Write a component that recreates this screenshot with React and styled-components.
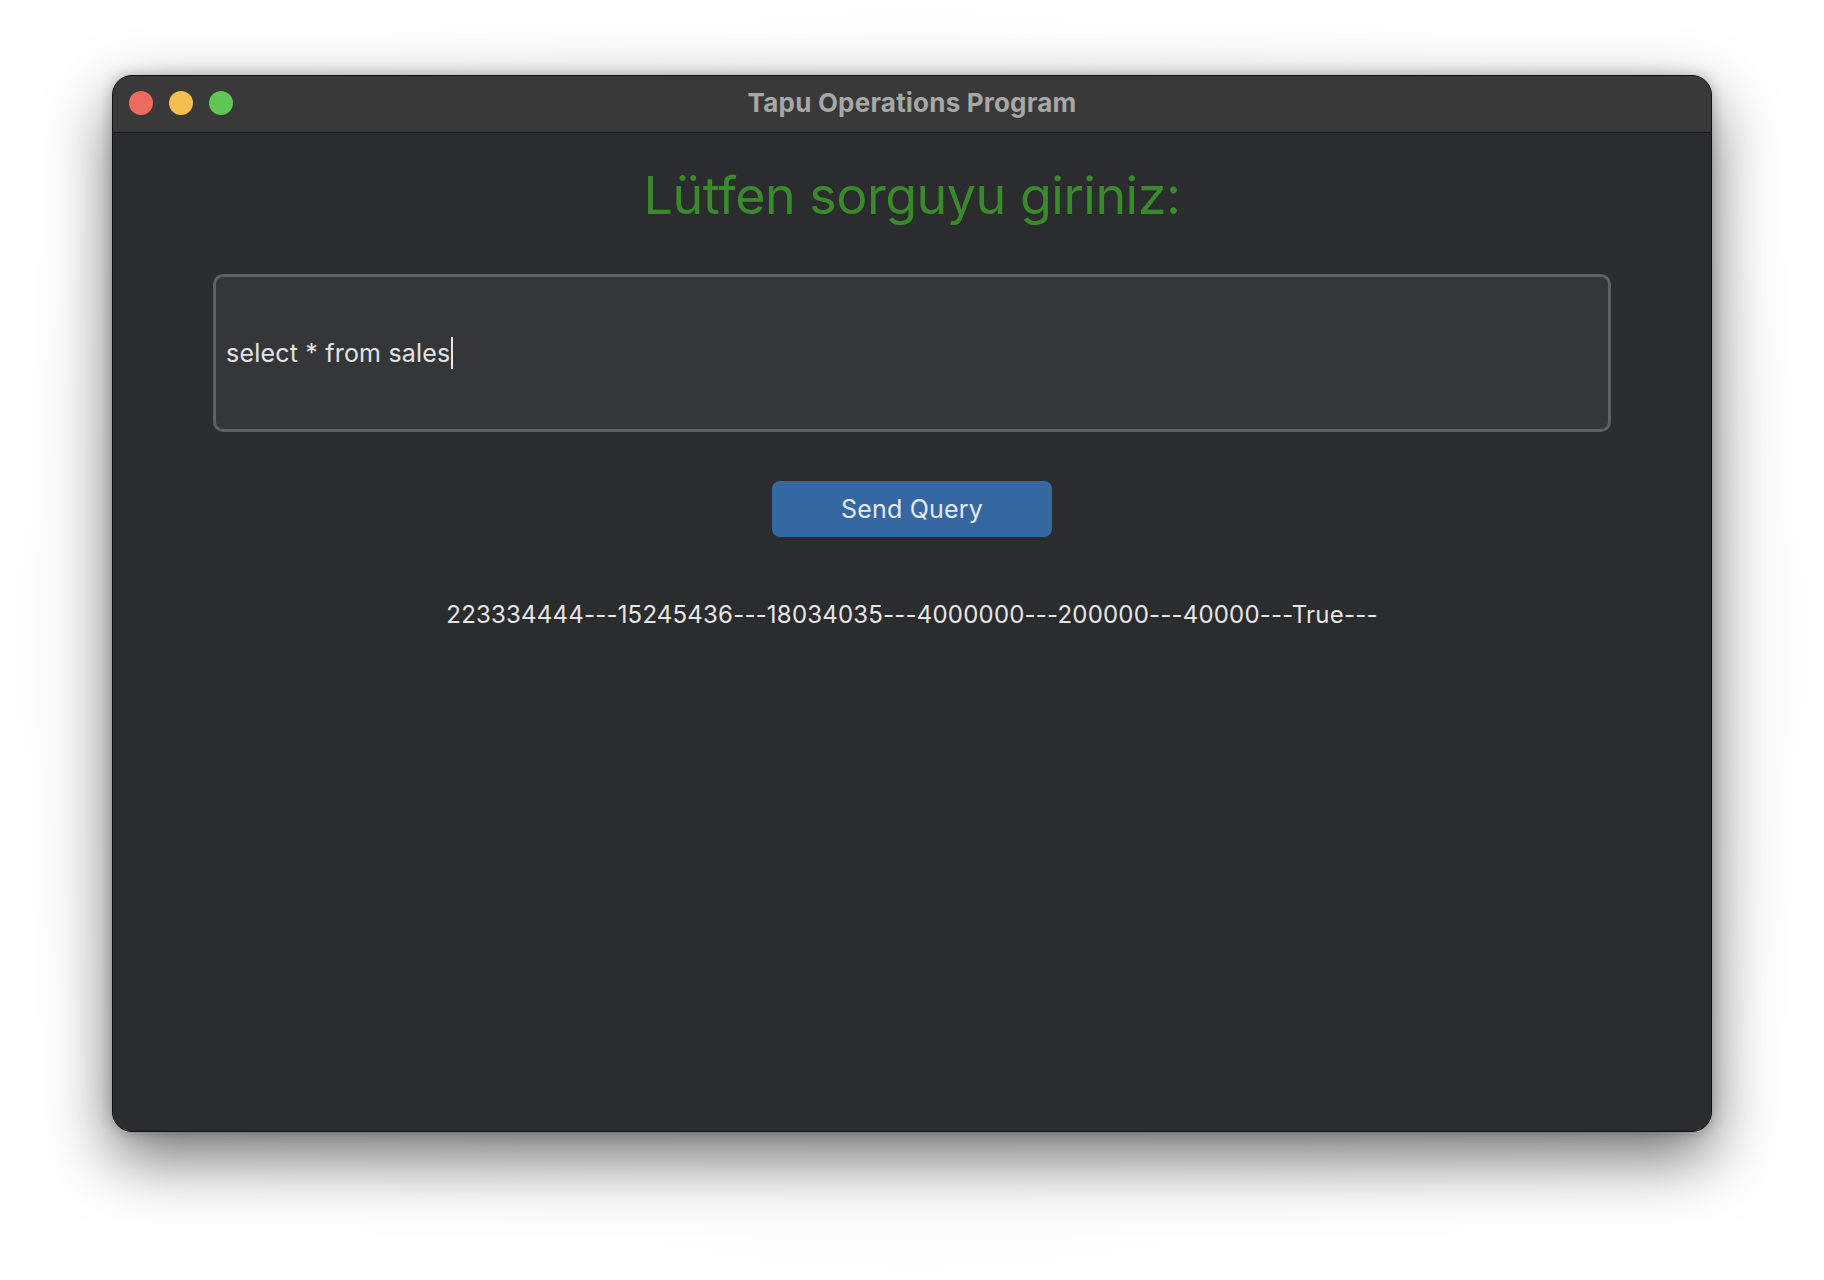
import React from 'react';
import styled, { createGlobalStyle } from 'styled-components';

const GlobalStyle = createGlobalStyle`
  html, body {
    margin: 0;
    padding: 0;
    background: #ffffff;
  }
  body {
    font-family: Inter, "Noto Sans", sans-serif;
  }
`;

const Page = styled.div`
  width: 1824px;
  height: 1280px;
  display: flex;
  justify-content: center;
  align-items: flex-start;
  padding-top: 75px;
  box-sizing: border-box;
  background: radial-gradient(ellipse at 50% 50%, #f4f4f4 0%, #ffffff 80%);
`;

const Window = styled.div`
  width: 1600px;
  height: 1057px;
  display: flex;
  flex-direction: column;
  border-radius: 20px;
  overflow: hidden;
  background: #2b2c2e;
  border: 1px solid #111;
  box-shadow: inset 0 0 0 1px #4e4f51, 0 26px 64px rgba(0, 0, 0, 0.55),
    0 0 14px rgba(0, 0, 0, 0.25);
  box-sizing: border-box;
`;

const TitleBar = styled.div`
  position: relative;
  height: 56px;
  flex-shrink: 0;
  display: flex;
  align-items: center;
  justify-content: center;
  background: #39393a;
  border-bottom: 1px solid #141414;
`;

const Lights = styled.div`
  position: absolute;
  left: 16px;
  top: 15px;
  display: flex;
  gap: 16px;
`;

const Light = styled.span`
  width: 24px;
  height: 24px;
  border-radius: 50%;
  background: ${(p) => p.color};
`;

const Title = styled.div`
  font-family: Inter, "Noto Sans", sans-serif;
  font-weight: 700;
  font-size: 26px;
  color: #a7a7a7;
  letter-spacing: 0.2px;
  margin-top: -3px;
`;

const Body = styled.div`
  flex: 1;
  display: flex;
  flex-direction: column;
  align-items: center;
  padding: 27px 100px 0;
  background: #2b2c2e;
`;

const Heading = styled.h1`
  margin: 0;
  font-family: Inter, "Noto Sans", sans-serif;
  font-weight: 400;
  font-size: 52px;
  line-height: 72px;
  color: #3a8a2c;
  letter-spacing: -0.5px;
`;

const QueryBox = styled.div`
  margin-top: 42px;
  width: 100%;
  height: 158px;
  box-sizing: border-box;
  display: flex;
  align-items: center;
  padding: 0 10px;
  background: #353638;
  border: 3px solid #5d6064;
  border-radius: 10px;
`;

const QueryText = styled.span`
  font-family: Inter, "Noto Sans", sans-serif;
  font-size: 25px;
  letter-spacing: 0.2px;
  color: #e3e3e6;
`;

const Caret = styled.span`
  display: inline-block;
  width: 2px;
  height: 32px;
  margin-left: 1px;
  background: #e6e6e6;
  vertical-align: middle;
`;

const SendButton = styled.button`
  margin-top: 49px;
  width: 280px;
  height: 56px;
  border: none;
  border-radius: 8px;
  background: #3568a0;
  color: #e3e8f0;
  font-family: Inter, "Noto Sans", sans-serif;
  font-size: 25px;
  letter-spacing: 0.2px;
  cursor: pointer;
`;

const Result = styled.div`
  margin-top: 63px;
  font-family: Inter, "Noto Sans", sans-serif;
  font-size: 24px;
  letter-spacing: 0.2px;
  color: #e6e6e8;
`;

export default function App() {
  return (
    <>
      <GlobalStyle />
      <Page>
        <Window>
          <TitleBar>
            <Lights>
              <Light color="#ed6a5e" />
              <Light color="#f4bf4f" />
              <Light color="#61c554" />
            </Lights>
            <Title>Tapu Operations Program</Title>
          </TitleBar>
          <Body>
            <Heading>Lütfen sorguyu giriniz:</Heading>
            <QueryBox>
              <QueryText>select * from sales</QueryText>
              <Caret />
            </QueryBox>
            <SendButton>Send Query</SendButton>
            <Result>223334444---15245436---18034035---4000000---200000---40000---True---</Result>
          </Body>
        </Window>
      </Page>
    </>
  );
}
